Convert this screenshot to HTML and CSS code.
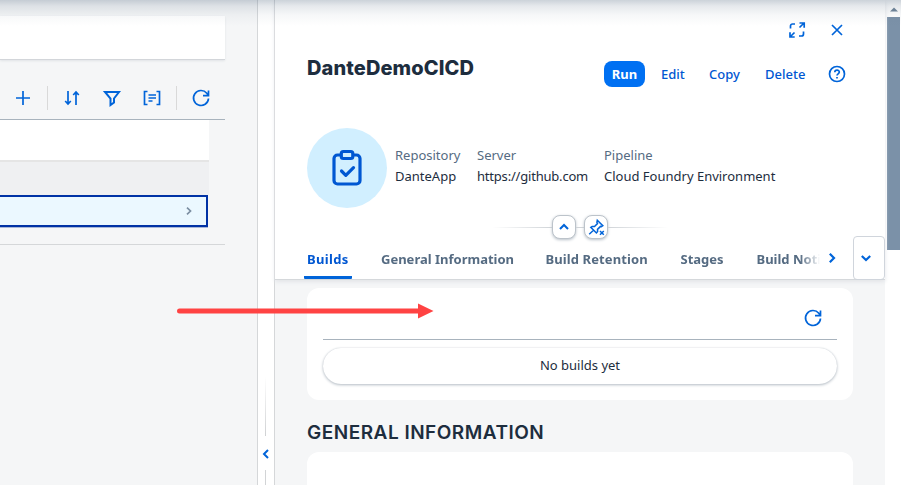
FILE: index.html
```html
<!DOCTYPE html>
<html lang="en">
<head>
<meta charset="utf-8">
<title>DanteDemoCICD</title>
<link rel="stylesheet" href="styles.css">
</head>
<body>
<div class="app">
  <section class="master">
    <div class="filter-bar"></div>
    <div class="toolbar">
      <svg class="icon add" viewBox="0 0 20 20"><path d="M10 3v14M3 10h14"/></svg>
      <i class="sep"></i>
      <svg class="icon sort" viewBox="0 0 20 20"><path d="M6 3v12.500M3.200 13L6 16l2.800-3M14 17V4.500M11.200 7L14 4l2.800 3"/></svg>
      <svg class="icon filter" viewBox="0 0 20 20"><path d="M3 4h14l-5 6.500v4L8.500 17v-6.500z"/></svg>
      <svg class="icon group" viewBox="0 0 20 20"><path d="M5.500 3.500H2.500v13h3M14.500 3.500h3v13h-3M6.500 7h7.500M6.500 10h7.500M6.500 13h4"/></svg>
      <i class="sep"></i>
      <svg class="icon refresh" viewBox="0 0 20 20"><path d="M17.500 10.500A7.500 7.500 0 1 1 15.800 5.200L17.500 7.500M17.500 2.500v5.200H12"/></svg>
    </div>
    <div class="list">
      <div class="list-head"></div>
      <div class="list-group"></div>
      <div class="list-row"><svg class="row-arrow" viewBox="0 0 8 10"><path d="M2 1.700L5.500 5 2 8.300"/></svg></div>
    </div>
    <div class="list-end"></div>
  </section>
  <div class="splitter">
    <i class="grip-top"></i>
    <svg class="collapse" viewBox="0 0 10 12"><path d="M7 2L3 6l4 4"/></svg>
    <i class="grip-bottom"></i>
  </div>
  <main class="detail">
    <header class="header">
      <div class="window-actions">
        <svg class="icon expand" viewBox="0 0 20 20"><path d="M12.500 3h4.700v4.700M17 3l-4.500 4.500M3 12.300V17h4.700M3 17l4.500-4.500M3.500 8.500V6a2 2 0 0 1 2-2H8M16.500 11.500V14a2 2 0 0 1-2 2H12"/></svg>
        <svg class="icon" viewBox="0 0 20 20"><path d="M5 5l10 10M15 5L5 15"/></svg>
      </div>
      <div class="title-row">
        <h1>DanteDemoCICD</h1>
        <nav class="actions">
          <span class="run"><b>Run</b></span>
          <span class="edit">Edit</span>
          <span class="copy">Copy</span>
          <span class="delete">Delete</span>
          <svg class="icon" viewBox="0 0 20 20"><circle cx="10" cy="10" r="7.500"/><path d="M7.800 8.300C7.800 5.400 12.300 5.400 12.300 8.100c0 1.900-2.300 1.700-2.300 3.500M10 12.900v1.600"/></svg>
        </nav>
      </div>
      <div class="summary">
        <div class="avatar"><svg viewBox="0 0 32 38"><rect x="3" y="6" width="26" height="29" rx="3.500"/><rect class="clip" x="10.300" y="2.500" width="11.500" height="7" rx="2"/><path d="M10.500 22l4.300 4.300 7.700-7.700"/></svg></div>
        <dl class="repo"><dt>Repository</dt><dd>DanteApp</dd></dl>
        <dl class="server"><dt>Server</dt><dd>https://github.com</dd></dl>
        <dl class="pipeline"><dt>Pipeline</dt><dd>Cloud Foundry Environment</dd></dl>
      </div>
      <div class="header-toggle">
        <i class="line-left"></i>
        <span class="round"><svg viewBox="0 0 20 20"><path d="M6 12l4-4 4 4"/></svg></span>
        <i class="line-mid"></i>
        <span class="round"><svg class="pin" viewBox="0 0 20 20"><path d="M11.300 3.200l5.500 5.400-1.500 1-.8-.2-3 3 .1 2.200-1.200 1.400-5.600-5.600 1.400-1 2.300.1 3-3-.6-1.200zM7.500 13.200L3.200 17.200M14 14l3.800 3.800M17.800 14L14 17.800"/></svg></span>
        <i class="line-right"></i>
      </div>
      <div class="tabs">
        <div class="tab-strip">
          <span class="tab active">Builds</span>
          <span class="tab general">General Information</span>
          <span class="tab retention">Build Retention</span>
          <span class="tab stages">Stages</span>
          <span class="tab notify">Build Noti</span>
        </div>
        <svg class="tab-next" viewBox="0 0 10 12"><path d="M2.800 1.800L7 6l-4.200 4.200"/></svg>
        <div class="tab-more"><svg viewBox="0 0 12 10"><path d="M1.800 3L6 7l4.200-4"/></svg></div>
      </div>
    </header>
    <div class="content">
      <section class="card builds">
        <div class="card-bar"><svg class="icon" viewBox="0 0 20 20"><path d="M17.500 10.500A7.500 7.500 0 1 1 15.800 5.200L17.500 7.500M17.500 2.500v5.200H12"/></svg></div>
        <div class="empty"><span>No builds yet</span></div>
      </section>
      <h2>GENERAL INFORMATION</h2>
      <section class="card info"></section>
    </div>
  </main>
  <aside class="scrollbar">
    <svg viewBox="0 0 8 5"><path d="M0 4.500L4 .5l4 4z"/></svg>
    <div class="thumb"></div>
  </aside>
</div>
<div class="top-shadow"></div>
<svg class="pointer" viewBox="0 0 258 16"><path class="shaft" d="M2.500 8H242"/><path class="head" d="M241 .5L256.500 8 241 15.500z"/></svg>
</body>
</html>
```
FILE: styles.css
```css
* { box-sizing: border-box; }
body { margin: 0; overflow: hidden; font: 13px/20px "Noto Sans", "Open Sans", sans-serif; color: #1d2d3e; background: #fff; }
h1, h2, dl, dt, dd { margin: 0; }
svg { display: block; flex: none; fill: none; stroke: #0064d9; stroke-width: 1.7; }
.icon { width: 20px; height: 20px; }
.app { display: flex; width: 901px; height: 485px; }

.master { width: 258px; flex: none; padding-top: 16px; background: #f5f6f7; border-right: 1px solid #d5d7d9; }
.filter-bar { width: 225px; height: 44px; background: #fff; border-bottom: 1px solid #d3d6da; box-shadow: 0 1px 2px #e1e4e7; }
.toolbar { display: flex; align-items: center; width: 225px; height: 60px; padding: 16px 0 0 13px; border-bottom: 1px solid #a8b3bd; }
.sep { width: 1px; height: 24px; background: #d9d9d9; }
.add + .sep { margin-left: 14px; }
.sort { margin-left: 14px; }
.filter, .group { margin-left: 20px; }
.filter { stroke-width: 2; }
.group + .sep { margin-left: 14px; }
.refresh { margin-left: 14px; }
.list { width: 209px; }
.list-head { height: 42px; background: #fff; border-bottom: 2px solid #e5e5e5; }
.list-group { height: 33px; background: #eff0f2; }
.list-row { display: flex; align-items: center; justify-content: flex-end; width: 208px; height: 32px; padding-right: 13px; background: #ebf8ff; border: 2px solid #0032a5; border-left: 0; box-shadow: 0 1px #a8b7d8; }
.row-arrow { width: 8px; height: 10px; stroke: #7b8ea2; }
.list-end { width: 225px; height: 18px; border-bottom: 1px solid #d5d7d9; }

.splitter { width: 17px; flex: none; display: flex; flex-direction: column; align-items: center; border-right: 1px solid #d5d7d9; }
.grip-top { width: 1px; height: 60px; margin: 376px 1px 0 0; background: linear-gradient(#fff, #cfd1d3); }
.collapse { width: 10px; height: 12px; margin: 12px 0 10px; stroke-width: 2; }
.grip-bottom { width: 1px; flex: 1; margin-right: 1px; background: #d2d4d6; }

.detail { display: flex; flex-direction: column; width: 610px; height: 485px; flex: none; background: #f5f6f7; }
.header { position: relative; height: 280px; flex: none; background: #fff; border-bottom: 1px solid #d5d8db; box-shadow: 0 2px 4px #e3e5e8; }
.window-actions { display: flex; justify-content: flex-end; gap: 20px; padding: 20px 38px 0 0; }
.title-row { display: flex; justify-content: space-between; height: 88px; padding: 15px 38px 0 32px; }
h1 { font: 800 20px/26px Inter, "Noto Sans", sans-serif; letter-spacing: .1px; }
.actions { display: flex; align-items: center; height: 26px; margin-top: 6px; color: #0057d2; font-weight: 500; }
.actions span { white-space: nowrap; }
.run { width: 41px; height: 26px; line-height: 26px; text-align: center; background: #0070f2; color: #fff; border-radius: 8px; }
.edit { width: 24px; margin-left: 16px; }
.copy { width: 32px; margin-left: 24px; }
.delete { width: 40px; margin: 0 22px 0 24px; }
.summary { display: flex; height: 80px; padding-left: 32px; }
.avatar { display: flex; align-items: center; justify-content: center; width: 80px; height: 80px; margin-right: 8px; border-radius: 50%; background: #d1efff; }
.avatar svg { width: 32px; height: 38px; stroke: #0057d2; stroke-width: 3.2; stroke-linecap: round; stroke-linejoin: round; }
.avatar .clip { fill: #d1efff; }
dl { padding-top: 17px; line-height: 21px; white-space: nowrap; }
dt { color: #556b82; }
.repo { width: 82px; }
.server { width: 127px; }
.server dd { letter-spacing: -.2px; }
.header-toggle { display: flex; align-items: center; height: 26px; margin-top: 6px; padding-left: 217px; }
.round { display: flex; align-items: center; justify-content: center; width: 24px; height: 24px; border: 1px solid #bcc3ca; border-radius: 8px; background: #fff; box-shadow: 0 1px 3px #b9c1c9; }
.round svg { width: 20px; height: 20px; stroke-width: 2; }
.round .pin { stroke-width: 1.5; }
.line-left { width: 60px; height: 1px; background: linear-gradient(90deg, #fff, #d0d4d8); }
.line-mid { width: 8px; height: 1px; background: #d0d4d8; }
.line-right { width: 60px; height: 1px; background: linear-gradient(90deg, #d0d4d8, #fff); }
.tabs { display: flex; height: 44px; margin-top: -4px; }
.tab-strip { display: flex; width: 545px; padding-left: 29px; -webkit-mask-image: linear-gradient(90deg, #000 525px, transparent 545px); mask-image: linear-gradient(90deg, #000 525px, transparent 545px); }
.tab { flex: none; height: 43px; line-height: 46px; padding: 0 3px; font-weight: 700; color: #556b82; white-space: nowrap; }
.tab.active { width: 48px; color: #0057d2; border-bottom: 3px solid #0064d9; border-radius: 0 0 1px 1px; letter-spacing: .35px; }
.general { width: 139px; margin-left: 26px; }
.retention { width: 109px; margin-left: 25.500px; letter-spacing: .1px; }
.stages { width: 50px; margin-left: 26px; }
.notify { width: 66px; margin-left: 26px; }
.tab-next { width: 10px; height: 12px; margin: 16px 16px 0 7px; stroke-width: 2.2; }
.tab-more { display: flex; align-items: center; justify-content: center; width: 32px; height: 44px; padding-right: 6px; border: 1px solid #d0d5dc; border-radius: 4px; }
.tab-more svg { width: 12px; height: 10px; stroke-width: 2.2; }

.content { display: flex; flex-direction: column; flex: 1; padding: 8px 32px 0; }
.card { width: 546px; background: #fff; border-radius: 12px; }
.builds { height: 112px; padding: 8px 16px; }
.card-bar { display: flex; align-items: center; justify-content: flex-end; height: 44px; padding-right: 14px; border-bottom: 1px solid #a8b3bd; }
.empty { height: 36px; margin-top: 8px; border-radius: 18px; text-align: center; line-height: 35px; box-shadow: 0 0 1px #c9ced4, 0 1px 3px #b4bcc4; }
h2 { height: 52px; padding-top: 20px; font: 600 19px/26px Inter, "Noto Sans", sans-serif; letter-spacing: .5px; white-space: nowrap; }
.info { flex: 1; border-radius: 12px 12px 0 0; }
.scrollbar { width: 16px; flex: none; padding-left: 2px; }
.scrollbar svg { width: 8px; height: 5px; margin: 7px 0 5px 3px; fill: #6f8499; stroke: none; }
.thumb { width: 13px; height: 233px; background: #7b91a8; }

.top-shadow { position: absolute; inset: 0 0 auto; height: 26px; background: linear-gradient(rgba(85, 107, 130, .3), rgba(85, 107, 130, .15) 6px, rgba(85, 107, 130, .05) 15px, transparent); }
.pointer { position: absolute; left: 177px; top: 303px; width: 258px; height: 16px; }
.shaft { stroke: #ff4343; stroke-width: 5; stroke-linecap: round; }
.head { fill: #ff4343; stroke: none; }
```
